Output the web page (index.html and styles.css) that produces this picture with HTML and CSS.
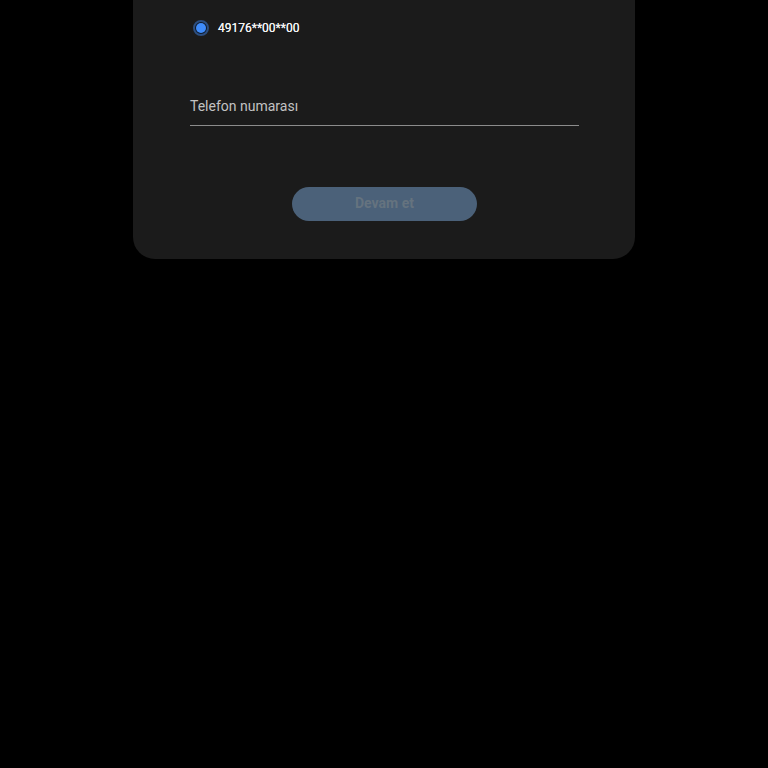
FILE: index.html
```html
<!DOCTYPE html>
<html lang="tr">
<head>
<meta charset="utf-8">
<link rel="stylesheet" href="styles.css">
</head>
<body>
<div class="card">
  <label class="radio-row">
    <span class="radio"><span class="dot"></span></span>
    <span class="radio-text">49176**00**00</span>
  </label>
  <div class="field">
    <span class="field-label">Telefon numarası</span>
  </div>
  <div class="actions">
    <button class="btn">Devam et</button>
  </div>
</div>
</body>
</html>
```
FILE: styles.css
```css
html, body {
  margin: 0;
  padding: 0;
  background: #000;
  font-family: Roboto, "Noto Sans", sans-serif;
}
.card {
  margin-left: 133px;
  width: 502px;
  height: 259px;
  box-sizing: border-box;
  background: #1b1b1b;
  border-radius: 0 0 22px 22px;
  padding: 20px 56px 0 57px;
  display: flex;
  flex-direction: column;
}
.radio-row {
  display: flex;
  align-items: center;
  gap: 9px;
  padding-left: 3px;
  height: 16px;
}
.radio {
  width: 16px;
  height: 16px;
  box-sizing: border-box;
  border-radius: 50%;
  border: 2px solid #2c4e80;
  background: #0f1a2a;
  display: flex;
  align-items: center;
  justify-content: center;
}
.dot {
  width: 10px;
  height: 10px;
  border-radius: 50%;
  background: #3f8cfb;
}
.radio-text {
  color: #f4f4f4;
  font-size: 12px;
  font-weight: 400;
  line-height: 16px;
  text-shadow: 0 0 0.5px #f4f4f4;
}
.field {
  margin-top: 47px;
  height: 43px;
  box-sizing: border-box;
  border-bottom: 1px solid #8c8c8c;
  display: flex;
  align-items: center;
}
.field-label {
  color: #c2c2c2;
  font-size: 14px;
  margin-top: 3px;
}
.actions {
  display: flex;
  justify-content: center;
  margin-top: 61px;
}
.btn {
  width: 185px;
  height: 34px;
  border: none;
  border-radius: 17px;
  background: #4b6179;
  color: #65737f;
  font-family: Roboto, "Noto Sans", sans-serif;
  font-size: 14px;
  font-weight: 700;
  line-height: 32px;
  padding: 0 0 2px;
}
```
